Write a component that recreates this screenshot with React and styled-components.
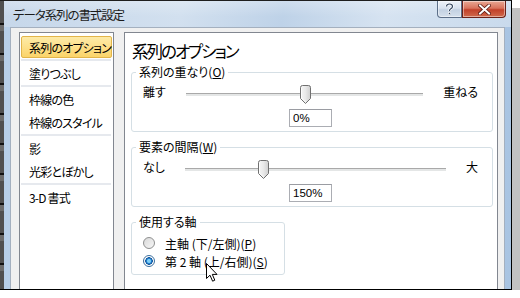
import React from 'react';
import styled, { createGlobalStyle } from 'styled-components';

const GlobalStyle = createGlobalStyle`
  body {
    margin: 0;
    background: #fff;
    font-family: "Noto Sans CJK JP", sans-serif;
    font-feature-settings: "palt";
    color: #000;
  }
`;

const Shot = styled.div`
  width: 512px;
  height: 290px;
  box-sizing: border-box;
  display: flex;
  border-top: 1px solid #1e1e1e;
  border-right: 1px solid #000;
  border-bottom: 1px solid #000;
  box-shadow: 8px 8px 0 #c2c2c2;
  overflow: hidden;
`;

const BackEdge = styled.div`
  width: 4px;
  flex: none;
  background: repeating-linear-gradient(180deg, #505050 0 22px, #111 22px 24px, #6a6a6a 24px 30px);
`;

const Window = styled.div`
  flex: 1;
  display: flex;
  flex-direction: column;
  background: linear-gradient(90deg, #b7cfe8 0%, #c3d7ec 50%, #a9c4e2 100%);
`;

const TitleBar = styled.div`
  height: 26px;
  flex: none;
  display: flex;
  align-items: center;
  padding-left: 9px;
  background:
    linear-gradient(180deg, rgba(255,255,255,0.25), rgba(255,255,255,0) 60%),
    linear-gradient(100deg, #c6d7ea 0%, #d2e0ef 35%, #bed2e8 55%, #d6e3f1 75%, #c9daec 100%);
`;

const Title = styled.div`
  font-size: 12.5px;
  letter-spacing: -1.1px;
  color: #1b1b1b;
`;

const Controls = styled.div`
  margin-left: auto;
  margin-right: 5px;
  align-self: flex-start;
  display: flex;
`;

const CtrlButton = styled.div`
  height: 17px;
  box-sizing: border-box;
  display: flex;
  align-items: center;
  justify-content: center;
  border: 1px solid ${p => (p.$close ? '#6b2118' : '#5c6f88')};
  border-top: none;
  width: ${p => (p.$close ? '44px' : '25px')};
  border-radius: ${p => (p.$close ? '0 0 4px 0' : '0 0 0 4px')};
  background: ${p =>
    p.$close
      ? 'linear-gradient(180deg, #e9a894 0%, #d9735c 45%, #c2412a 55%, #d06a4c 100%)'
      : 'linear-gradient(180deg, #edf2f8 0%, #d8e2ee 45%, #c3d1e2 55%, #d5e0ec 100%)'};
  box-shadow: inset 0 0 0 1px rgba(255,255,255,0.45);
`;

const Body = styled.div`
  flex: 1;
  display: flex;
  gap: 10px;
  margin: 0 6px;
  padding: 4px 6px 0 8px;
  background: #f0f0f0;
  border: 1px solid #a4b0bf;
  border-bottom: none;
  min-height: 0;
`;

const NavList = styled.div`
  width: 95px;
  flex: none;
  box-sizing: border-box;
  background: #fff;
  border: 1px solid #828790;
  border-bottom: none;
  padding-top: 2px;
`;

const NavItem = styled.div`
  height: 22px;
  margin: 1px;
  box-sizing: border-box;
  display: flex;
  align-items: center;
  padding-left: 7px;
  font-size: 12px;
  letter-spacing: -0.8px;
  white-space: nowrap;
  border: 1px solid ${p => (p.$active ? '#e2b54a' : 'transparent')};
  border-radius: 2px;
  background: ${p => (p.$active ? 'linear-gradient(180deg, #fdeba8 0%, #fde08a 50%, #fbd46a 100%)' : 'transparent')};
`;

const NavSep = styled.div`
  height: 2px;
  margin: 0 2px 0 1px;
  background: #e6e9ee;
`;

const Panel = styled.div`
  flex: 1;
  position: relative;
  background: #fff;
  border: 1px solid #828790;
  border-bottom: none;
  padding: 7px 4px 0 6px;
`;

const Heading = styled.div`
  font-size: 16.5px;
  letter-spacing: -2px;
  line-height: 22px;
  padding-left: 1px;
  margin-bottom: 2px;
`;

const Group = styled.fieldset`
  margin: 0 0 7px 0;
  padding: 4px 14px 4px 11px;
  border: 1px solid #d5dfe5;
  border-radius: 3px;
  width: ${p => p.$width || 'auto'};
  box-sizing: border-box;
`;

const Legend = styled.legend`
  font-size: 12px;
  line-height: 16px;
  padding: 0 3px;
  margin-left: -7px;
`;

const U = styled.span`
  text-decoration: underline;
`;

const SliderRow = styled.div`
  height: 20px;
  display: flex;
  align-items: center;
  gap: 20px;
`;

const EndLabel = styled.span`
  font-size: 12px;
  margin-bottom: 6px;
  white-space: nowrap;
`;

const Track = styled.div`
  flex: 1;
  height: 3px;
  position: relative;
  box-sizing: border-box;
  border-top: 1px solid #a9a9a9;
  background: #e4e6e6;
`;

const Thumb = styled.svg`
  position: absolute;
  top: -9px;
  margin-left: -5px;
`;

const ValueBox = styled.div`
  width: 43px;
  height: 18px;
  box-sizing: border-box;
  margin: 5px auto 0;
  border: 1px solid #abadb3;
  border-top-color: #9a9ca2;
  font-size: 11.5px;
  line-height: 16px;
  padding-left: 3px;
  font-family: "Liberation Sans", "Noto Sans CJK JP", sans-serif;
`;

const RadioRow = styled.div`
  height: 18px;
  display: flex;
  align-items: center;
  gap: 10px;
  font-size: 12px;
  white-space: pre;
`;

const RadioDot = styled.span`
  width: 12px;
  height: 12px;
  box-sizing: border-box;
  border-radius: 50%;
  flex: none;
  border: 1px solid ${p => (p.$checked ? '#3b6f9e' : '#8e8f8f')};
  background: ${p =>
    p.$checked
      ? 'radial-gradient(circle, #7fd0f7 0 1.5px, #1f7fcf 2.5px, #0e4f96 3.5px, #fff 4px)'
      : 'linear-gradient(135deg, #d9d9d9, #f7f7f7)'};
`;

const Pointer = styled.svg`
  position: absolute;
  left: 81px;
  top: 230px;
`;

function Slider({ left, right, pos, value }) {
  return (
    <>
      <SliderRow>
        <EndLabel>{left}</EndLabel>
        <Track>
          <Thumb width="11" height="19" viewBox="0 0 11 19" style={{ left: `${pos}%` }}>
            <defs>
              <linearGradient id="tg" x1="0" y1="0" x2="1" y2="0">
                <stop offset="0" stopColor="#f6f6f6" />
                <stop offset="0.5" stopColor="#e9e9e9" />
                <stop offset="1" stopColor="#cfcfcf" />
              </linearGradient>
            </defs>
            <path d="M0.5 2.5 Q0.5 0.5 2.5 0.5 H8.5 Q10.5 0.5 10.5 2.5 V13.5 L5.5 18.5 L0.5 13.5 Z" fill="url(#tg)" stroke="#707070" />
            <path d="M1.5 3 V13 L5.5 17" fill="none" stroke="#fff" strokeOpacity="0.8" />
          </Thumb>
        </Track>
        <EndLabel>{right}</EndLabel>
      </SliderRow>
      <ValueBox>{value}</ValueBox>
    </>
  );
}

export default function App() {
  return (
    <>
      <GlobalStyle />
      <Shot>
        <BackEdge />
        <Window>
          <TitleBar>
            <Title>データ系列の書式設定</Title>
            <Controls>
              <CtrlButton>
                <svg width="9" height="12" viewBox="0 0 9 12">
                  <path d="M1.5 3.5 Q1.5 1 4.5 1 Q7.5 1 7.5 3.5 Q7.5 5 5.5 6 Q4.5 6.5 4.5 8" fill="none" stroke="#fff" strokeWidth="2.6" />
                  <path d="M1.5 3.5 Q1.5 1 4.5 1 Q7.5 1 7.5 3.5 Q7.5 5 5.5 6 Q4.5 6.5 4.5 8" fill="none" stroke="#34465e" strokeWidth="1.2" />
                  <rect x="3.5" y="9.5" width="2" height="2" fill="#34465e" stroke="#fff" strokeWidth="0.6" />
                </svg>
              </CtrlButton>
              <CtrlButton $close>
                <svg width="13" height="11" viewBox="0 0 13 11">
                  <path d="M2 1.5 L11 9.5 M11 1.5 L2 9.5" stroke="#5a1a12" strokeWidth="3.6" strokeLinecap="square" />
                  <path d="M2 1.5 L11 9.5 M11 1.5 L2 9.5" stroke="#fff" strokeWidth="2" strokeLinecap="square" />
                </svg>
              </CtrlButton>
            </Controls>
          </TitleBar>
          <Body>
            <NavList>
              <NavItem $active>系列のオプション</NavItem>
              <NavSep />
              <NavItem>塗りつぶし</NavItem>
              <NavSep />
              <NavItem>枠線の色</NavItem>
              <NavItem>枠線のスタイル</NavItem>
              <NavSep />
              <NavItem>影</NavItem>
              <NavItem>光彩とぼかし</NavItem>
              <NavSep />
              <NavItem>3-D 書式</NavItem>
            </NavList>
            <Panel>
              <Heading>系列のオプション</Heading>
              <Group>
                <Legend>系列の重なり(<U>O</U>)</Legend>
                <Slider left="離す" right="重ねる" pos={50} value="0%" />
              </Group>
              <Group>
                <Legend>要素の間隔(<U>W</U>)</Legend>
                <Slider left="なし" right="大" pos={30} value="150%" />
              </Group>
              <Group $width="154px">
                <Legend>使用する軸</Legend>
                <RadioRow>
                  <RadioDot />
                  <span>主軸 (下/左側)(<U>P</U>)</span>
                </RadioRow>
                <RadioRow>
                  <RadioDot $checked />
                  <span>第 2 軸 (上/右側)(<U>S</U>)</span>
                </RadioRow>
              </Group>
              <Pointer width="12" height="19" viewBox="0 0 12 19">
                <path d="M0.5 0.5 V15.5 L4 12.2 L6.6 18.2 L8.8 17.2 L6.3 11.4 H11 Z" fill="#fff" stroke="#000" strokeLinejoin="miter" />
              </Pointer>
            </Panel>
          </Body>
        </Window>
      </Shot>
    </>
  );
}
